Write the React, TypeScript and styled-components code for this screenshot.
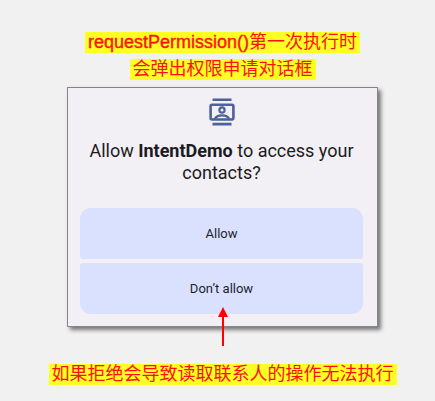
import React from "react";
import styled, { createGlobalStyle } from "styled-components";

const GlobalStyle = createGlobalStyle`
  * { box-sizing: border-box; }
  body { margin: 0; background: #f1f1f1; }
`;

const Page = styled.main`
  display: flex;
  flex-direction: column;
  padding: 32px 57px 16px 67px;
`;

const Note = styled.div`
  display: flex;
  flex-direction: column;
  align-items: center;
  gap: 6px;
  margin: 0 -32px;
`;

const Highlight = styled.span`
  padding: 0 3px;
  background: #ffff26;
  color: #ff1010;
  font-family: "Liberation Sans", "Noto Sans CJK SC", sans-serif;
  font-size: 18px;
  line-height: 21px;
  white-space: nowrap;
`;

const MethodName = styled.span`
  -webkit-text-stroke: 1px #ff1010;
  -webkit-text-stroke-width: thin;
`;

const Dialog = styled.section`
  display: flex;
  flex-direction: column;
  align-items: center;
  margin-top: 7px;
  padding: 9px 14px 12px 12px;
  border: 1px solid #858585;
  background: #f2eff5;
  box-shadow: 3px 3px 4px rgba(0, 0, 0, 0.5);
  font-family: Roboto, sans-serif;
  color: #1b1b21;
`;

const Title = styled.h1`
  margin: 13px 0 24px;
  font-size: 18px;
  font-weight: 400;
  line-height: 22px;
  text-align: center;
`;

const Actions = styled.div`
  display: flex;
  flex-direction: column;
  gap: 4px;
  width: 100%;
`;

const ActionButton = styled.button<{ $place: "first" | "last" }>`
  height: 51px;
  padding: 0;
  border: 0;
  border-radius: ${(p) => (p.$place === "first" ? "11px 11px 3px 3px" : "3px 3px 11px 11px")};
  background: #dae1ff;
  color: #1b1f2c;
  font: 400 13px/16px Roboto, sans-serif;
  cursor: pointer;
`;

const Arrow = styled.svg`
  position: relative;
  display: block;
  align-self: center;
  margin: -20px 0 18px;
`;

function ContactsIcon() {
  return (
    <svg width="28" height="30" viewBox="0 0 28 30" fill="none" stroke="#4c629a" strokeWidth="2.6" aria-hidden="true">
      <path d="M4.5 2.8h19M4.5 27.1h19" />
      <rect x="2.6" y="7.8" width="22.8" height="14.7" rx="1.5" />
      <circle cx="14" cy="13" r="2.6" strokeWidth="2.2" />
      <path d="M6.8 22c1.5-3 4.4-3.6 7.2-3.6s5.7.6 7.2 3.6" strokeWidth="2.2" />
    </svg>
  );
}

export default function App() {
  return (
    <>
      <GlobalStyle />
      <Page>
        <Note>
          <Highlight>
            <MethodName>requestPermission()</MethodName>第一次执行时
          </Highlight>
          <Highlight>会弹出权限申请对话框</Highlight>
        </Note>
        <Dialog role="dialog" aria-labelledby="permission-title">
          <ContactsIcon />
          <Title id="permission-title">
            Allow <b>IntentDemo</b> to access your
            <br />
            contacts?
          </Title>
          <Actions>
            <ActionButton type="button" $place="first">Allow</ActionButton>
            <ActionButton type="button" $place="last">Don’t allow</ActionButton>
          </Actions>
        </Dialog>
        <Arrow width="10" height="39" viewBox="0 0 10 39" aria-hidden="true">
          <path d="M5 9v30" stroke="#ff0000" strokeWidth="2" />
          <path d="M5 0l5 10H0z" fill="#ff0000" />
        </Arrow>
        <Note>
          <Highlight>如果拒绝会导致读取联系人的操作无法执行</Highlight>
        </Note>
      </Page>
    </>
  );
}
